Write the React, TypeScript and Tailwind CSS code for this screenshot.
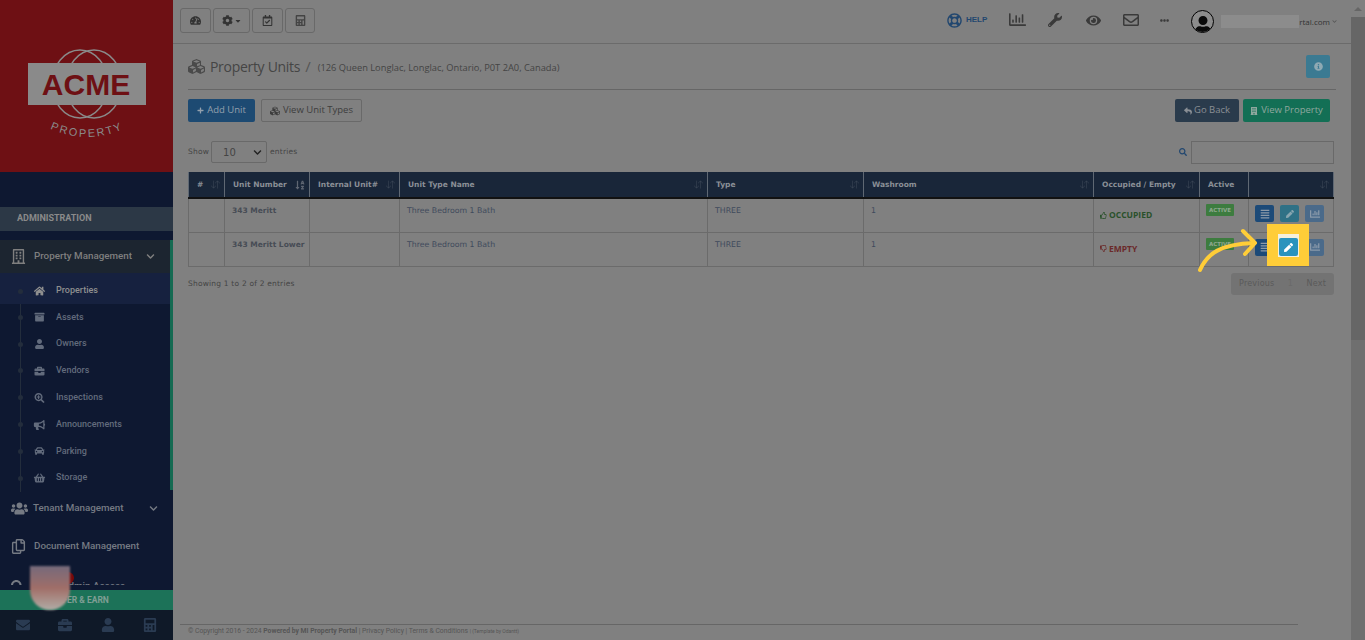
import React from "react";
import { FaHome, FaArchive, FaUser, FaBriefcase, FaSearchPlus, FaBullhorn, FaCar, FaShoppingBasket, FaUsers, FaRegCopy, FaChevronDown, FaTachometerAlt, FaCog, FaCaretDown, FaRegCalendarCheck, FaCalculator, FaCubes, FaPlus, FaReply, FaBuilding, FaRegBuilding, FaSearch, FaInfoCircle, FaRegLifeRing, FaWrench, FaEye, FaRegEnvelope, FaEllipsisH, FaSortAlphaDown, FaRegThumbsUp, FaRegThumbsDown, FaAlignJustify, FaPen, FaChartBar, FaEnvelope, FaRegChartBar } from "react-icons/fa";
import { BsArrowDownUp } from "react-icons/bs";

const subItems: [string, React.ElementType][] = [
  ["Properties", FaHome], ["Assets", FaArchive], ["Owners", FaUser], ["Vendors", FaBriefcase],
  ["Inspections", FaSearchPlus], ["Announcements", FaBullhorn], ["Parking", FaCar], ["Storage", FaShoppingBasket],
];

function Logo() {
  return (
    <div className="h-[172px] bg-[#6e1014] flex justify-center pt-[49px]">
      <svg width="120" height="95" viewBox="0 0 120 95">
        <g fill="none" stroke="#8a8a8a" strokeWidth="1.4">
          <ellipse cx="53" cy="35" rx="28" ry="34" />
          <ellipse cx="67" cy="35" rx="28" ry="34" />
        </g>
        <rect x="1" y="14" width="118" height="42" fill="#8a8a8a" />
        <text x="59" y="46" textAnchor="middle" fontFamily="'Liberation Sans', sans-serif" fontSize="30" fontWeight="700" fill="#6e1014">ACME</text>
        <path id="arc" d="M12 74 Q60 102 108 74" fill="none" />
        <text fontFamily="'Liberation Sans', sans-serif" fontSize="11" letterSpacing="2" fill="#8a8a8a"><textPath href="#arc" startOffset="50%" textAnchor="middle">PROPERTY</textPath></text>
      </svg>
    </div>
  );
}

function Sidebar() {
  return (
    <aside className="w-[173px] h-[640px] shrink-0 bg-[#0e1831] flex flex-col font-['Roboto',sans-serif] overflow-hidden">
      <Logo />
      <div className="mt-[35px] h-[24px] bg-[#2c3846] flex items-center pl-[17px] text-[9px] font-bold text-[#8a8a8a]">ADMINISTRATION</div>
      <div className="h-[345px] mt-[9px] overflow-hidden flex-none">
        <div className="border-r-[3px] border-[#156a52] h-[250px]">
          <div className="h-[33px] bg-[#1c2530] flex items-center pl-[11px] pr-[15px] text-[#7f7f7f] text-[9.8px] font-medium">
            <FaRegBuilding className="text-[15px] mr-[8px]" />
            <span className="flex-1">Property Management</span>
            <FaChevronDown className="text-[9px]" />
          </div>
          <ul className="relative">
            <div className="absolute left-[20px] top-0 bottom-0 w-px bg-[#232d3c]" />
            {subItems.map(([label, Icon], i) => (
              <li key={label} className={`relative flex items-center pl-[33px] text-[9px] font-medium ${i === 0 ? "h-[31px] pt-[5px] bg-[#16213f] text-[#8f8f8f]" : "h-[26.8px] text-[#626b7c]"}`}>
                <span className="absolute left-[18px] w-[5px] h-[5px] rounded-full bg-[#232d3c]" />
                <Icon className="w-[13px] text-[10px] mr-[10px]" />
                {label}
              </li>
            ))}
          </ul>
        </div>
        <div className="h-[37px] flex items-center pl-[11px] pr-[15px] text-[#757a83] text-[9.8px] font-medium">
          <FaUsers className="text-[17px] mr-[5px]" />
          <span className="flex-1">Tenant Management</span>
          <FaChevronDown className="text-[9px]" />
        </div>
        <div className="h-[38px] flex items-center pl-[11px] text-[#757a83] text-[9.8px] font-medium">
          <FaRegCopy className="text-[15px] mr-[8px]" />
          <span>Document Management</span>
        </div>
        <div className="h-[38px] mt-[2px] flex items-center pl-[11px] text-[#757a83] text-[9.8px] font-medium">
          <FaSearch className="text-[13px] mr-[10px]" />
          <span className="pl-[28px]">Admin Access</span>
        </div>
      </div>
      <div className="h-[20px] mt-[5px] bg-[#1c7258] flex items-center pl-[52px] text-[8.5px] font-bold text-[#7f9e94]">REFER &amp; EARN</div>
      <div className="flex-1 bg-[#0f1928] flex items-center justify-between pl-[16px] pr-[16px] text-[#2a3b52] text-[14px]">
        <FaEnvelope /><FaBriefcase /><FaUser /><FaCalculator />
      </div>
    </aside>
  );
}

function ToolButton({ children, w }: { children: React.ReactNode; w: string }) {
  return <button className={`${w} h-[25px] border border-[#696969] rounded-[3px] flex items-center justify-center text-[#333] text-[11px]`}>{children}</button>;
}

function Header() {
  return (
    <header className="h-[44px] border-b border-[#6b6b6b] flex items-center pl-[7px] pr-[14px] shrink-0">
      <div className="flex gap-[2px] mt-[-2px]">
        <ToolButton w="w-[31px]"><FaTachometerAlt /></ToolButton>
        <ToolButton w="w-[37px]"><FaCog /><FaCaretDown className="text-[8px] ml-[1px]" /></ToolButton>
        <ToolButton w="w-[31px]"><FaRegCalendarCheck /></ToolButton>
        <ToolButton w="w-[30px]"><FaCalculator className="text-[#444]" /></ToolButton>
      </div>
      <div className="ml-auto flex items-center text-[#3a3a3a]">
        <FaRegLifeRing className="text-[15px] text-[#22476f] mt-[-3px]" />
        <span className="ml-[4px] text-[8px] font-bold text-[#22476f] font-['Liberation_Sans',sans-serif] mt-[-3px]">HELP</span>
        <FaRegChartBar className="ml-[22px] text-[17px] mt-[-5px]" />
        <FaWrench className="ml-[22px] text-[14px] mt-[-3px]" />
        <FaEye className="ml-[24px] text-[15px] mt-[-3px]" />
        <FaRegEnvelope className="ml-[22px] text-[16px] mt-[-3px]" />
        <FaEllipsisH className="ml-[21px] text-[9px] mt-[-3px]" />
        <span className="ml-[22px] w-[23px] h-[23px] rounded-full border border-black bg-[#8c8c8c] overflow-hidden flex items-end justify-center text-[#0a0a0a]"><FaUser className="text-[18px] mb-[-2px]" /></span>
        <span className="ml-[7px] w-[78px] h-[13px] bg-[#8c8c8c]" />
        <span className="text-[8px] text-[#333] font-['Open_Sans',sans-serif]">rtal.com</span>
        <FaChevronDown className="ml-[2px] text-[5px] text-[#555]" />
      </div>
    </header>
  );
}

const cols = [36, 85, 90, 308, 156, 230, 106, 49, 85];
const heads: [string, boolean][] = [["#", true], ["Unit Number", true], ["Internal Unit#", true], ["Unit Type Name", true], ["Type", true], ["Washroom", true], ["Occupied / Empty", true], ["Active", false], ["", true]];

function ActionBtn({ className, children }: { className: string; children: React.ReactNode }) {
  return <span className={`w-[19px] h-[17px] rounded-[2px] flex items-center justify-center text-[10px] ${className}`}>{children}</span>;
}

function Row({ name, occupied }: { name: string; occupied: boolean }) {
  const td = "border border-[#6b6b6b] align-top pl-[7px] pr-[2px] pt-[6px] text-[7.5px] whitespace-nowrap";
  const body = "!text-[7.8px] text-[#3f4a5c]";
  return (
    <tr className="h-[34px]">
      <td className={td} />
      <td className={`${td} font-bold text-[#474c55]`}>{name}</td>
      <td className={td} />
      <td className={`${td} ${body}`}>Three Bedroom 1 Bath</td>
      <td className={`${td} ${body}`}>THREE</td>
      <td className={`${td} ${body}`}>1</td>
      <td className={`${td} !pt-[10px] !pl-[6px] font-bold ${occupied ? "text-[#29512b]" : "text-[#6b2a2a]"}`}>
        <span className="flex items-center gap-[2px] whitespace-nowrap font-['Open_Sans',sans-serif] text-[8.5px]">
          {occupied ? <FaRegThumbsUp className="text-[7px]" /> : <FaRegThumbsDown className="text-[7px]" />}
          {occupied ? "OCCUPIED" : "EMPTY"}
        </span>
      </td>
      <td className={`${td} !pl-[6px] !pt-[5px]`}>
        <span className="inline-block bg-[#3d7c3f] text-[#8fa88f] text-[5.5px] font-bold leading-[12px] h-[12px] px-[3px] rounded-[1px]">ACTIVE</span>
      </td>
      <td className={`${td} !pl-[6px] !pt-[6px]`}>
        <div className="flex gap-[6px]">
          <ActionBtn className="bg-[#1c4a78] text-[#8c9aa8]"><FaAlignJustify /></ActionBtn>
          <ActionBtn className="bg-[#2f7186] text-[#88a6b0]"><FaPen className="text-[8px]" /></ActionBtn>
          <ActionBtn className="bg-[#4a6a8a] text-[#8a9aab]"><FaChartBar /></ActionBtn>
        </div>
      </td>
    </tr>
  );
}

function Content() {
  return (
    <main className="flex-1 flex flex-col pl-[15px] pr-[15px] font-['DejaVu_Sans',sans-serif] min-h-0">
      <div className="h-[46px] flex items-center border-b border-[#666] justify-between">
        <div className="flex items-center text-[#444]">
          <FaCubes className="text-[17px] text-[#4a4a4a] mr-[5px]" />
          <span className="text-[14px] tracking-[-0.3px] text-[#454545] font-['Open_Sans',sans-serif]">Property Units</span>
          <span className="text-[15px] ml-[5px] text-[#555] font-['Open_Sans',sans-serif]">/</span>
          <span className="text-[9.3px] ml-[7px] mt-[2px] text-[#444] font-['Open_Sans',sans-serif]">(126 Queen Longlac, Longlac, Ontario, P0T 2A0, Canada)</span>
        </div>
        <button className="w-[24px] h-[23px] rounded-[2px] bg-[#3b7a92] flex items-center justify-center text-[#8fa9b3] text-[9px] mt-[-1px] mr-[6px]"><FaInfoCircle /></button>
      </div>
      <div className="flex justify-between mt-[9px] pr-[6px] font-['Open_Sans',sans-serif] text-[9.5px]">
        <div className="flex gap-[6px]">
          <button className="h-[23px] w-[67px] rounded-[2px] bg-[#1d4a72] text-[#93a0ad] flex items-center justify-center gap-[3px]"><FaPlus className="text-[7px]" />Add Unit</button>
          <button className="h-[23px] w-[101px] rounded-[2px] border border-[#696969] text-[#3d3d3d] flex items-center justify-center gap-[3px]"><FaCubes className="text-[10px]" />View Unit Types</button>
        </div>
        <div className="flex gap-[4px]">
          <button className="h-[23px] w-[64px] rounded-[2px] bg-[#2a3b4c] text-[#8a8f95] flex items-center justify-center gap-[2px]"><FaReply className="text-[8px]" />Go Back</button>
          <button className="h-[23px] w-[87px] rounded-[2px] bg-[#136f55] text-[#8fa89f] flex items-center justify-center gap-[3px]"><FaBuilding className="text-[8px]" />View Property</button>
        </div>
      </div>
      <div className="flex justify-between items-center mt-[19px] h-[22px] pr-[2px] text-[7.5px] text-[#444]">
        <div className="flex items-center gap-[2px] tracking-[0.2px]">
          <span>Show</span>
          <span className="w-[56px] h-[22px] border border-[#696969] rounded-[2px] flex items-center justify-between pl-[11px] pr-[4px] text-[10px] text-[#444]">10<FaChevronDown className="text-[9px] text-[#222]" /></span>
          <span className="ml-[1px]">entries</span>
        </div>
        <div className="flex items-center gap-[4px]">
          <FaSearch className="text-[8px] text-[#22476f]" />
          <span className="w-[143px] h-[23px] border border-[#696969]" />
        </div>
      </div>
      <div className="mt-[9px] pr-[3px]">
        <table className="w-[1146px] table-fixed border-collapse">
          <colgroup>{cols.map((w, i) => <col key={i} style={{ width: w }} />)}</colgroup>
          <thead>
            <tr className="h-[26px] bg-[#192639] border-b-2 border-[#111]">
              {heads.map(([h, sort], i) => (
                <th key={i} className="border-x border-[#5f6873] pl-[8px] pr-[4px] text-left text-[7.5px] font-bold text-[#8a8f96] whitespace-nowrap">
                  <span className="flex items-center justify-between">
                    <span>{h}</span>
                    {sort && (i === 1 ? <FaSortAlphaDown className="text-[10px] text-[#5f6672]" /> : <BsArrowDownUp className="text-[9px] text-[#3d4857]" />)}
                  </span>
                </th>
              ))}
            </tr>
          </thead>
          <tbody>
            <Row name="343 Meritt" occupied />
            <Row name="343 Meritt Lower" occupied={false} />
          </tbody>
        </table>
      </div>
      <div className="flex justify-between mt-[6px] pr-[2px] text-[7.5px] text-[#444] tracking-[0.2px]">
        <span className="mt-[5px]">Showing 1 to 2 of 2 entries</span>
        <div className="h-[22px] w-[103px] rounded-[3px] bg-[#737373] flex items-center justify-between px-[8px] text-[8px] text-[#5a5a5a]">
          <span>Previous</span><span className="text-[#6a6a6a]">1</span><span>Next</span>
        </div>
      </div>
      <div className="mt-auto h-[16px] -ml-[8px] mr-[38px] border-t border-[#666] pt-[1px] pl-[8px] text-[6.8px] text-[#555] font-['Roboto',sans-serif] whitespace-nowrap">
        © Copyright 2016 - 2024 <b>Powered by MI Property Portal</b> | Privacy Policy | Terms &amp; Conditions <span className="text-[5px]">| (Template by Odantt)</span>
      </div>
    </main>
  );
}

export default function App() {
  return (
    <div className="relative w-[1365px] h-[640px] overflow-hidden flex bg-[#808080]">
      <Sidebar />
      <div className="flex-1 flex flex-col min-w-0">
        <Header />
        <Content />
      </div>
      <div className="w-[14px] shrink-0 bg-[#6f6f6f] flex flex-col items-center">
        <div className="h-[17px] w-full bg-[#808080] flex items-center justify-center"><span className="border-x-[4px] border-x-transparent border-b-[4px] border-b-[#666]" /></div>
        <div className="h-[323px] w-full bg-[#666]" />
      </div>

      {/* blurred avatar over the sidebar */}
      <div className="absolute left-[67px] top-[572px] w-[7px] h-[12px] rounded-r-full bg-[#7a0808]" />
      <div className="absolute left-[30px] top-[566px] w-[40px] h-[44px] rounded-b-[20px] bg-linear-to-b from-[#75697a] via-[#a06e68] to-[#b0aca6] blur-[1px]" />

      {/* tutorial highlight */}
      <div className="absolute left-[1267px] top-[224px] w-[42px] h-[42px] bg-[#ffcd38]" />
      <div className="absolute left-[1278px] top-[234px] w-[21px] h-[23px] bg-[#f5f0dc] flex items-end justify-center">
        <span className="w-[19px] h-[18px] mb-[1px] rounded-[2px] bg-[#2a93bd] text-white flex items-center justify-center text-[9px]"><FaPen /></span>
      </div>
      <svg className="absolute left-[1190px] top-[224px]" width="75" height="52" viewBox="0 0 75 52" fill="none" stroke="#ffcd38" strokeWidth="4" strokeLinecap="round" strokeLinejoin="round">
        <path d="M10 46 C 17 30 30 20 64 19" />
        <path d="M53 7 L65 19 L55 30" />
      </svg>
    </div>
  );
}
